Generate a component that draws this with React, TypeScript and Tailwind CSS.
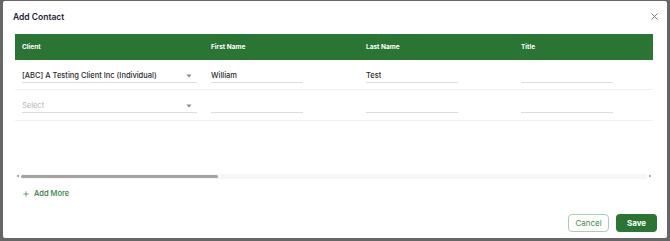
import { X, Plus } from 'lucide-react'

const font = { fontFamily: 'Inter, "Noto Sans", sans-serif' }

function Caret() {
  return (
    <svg width="6" height="4" viewBox="0 0 6 4" className="shrink-0">
      <path d="M0.5 0.5 L5.5 0.5 L3 3.5 Z" fill="#8a8a8a" />
    </svg>
  )
}

function Underline({ value, placeholder, select, wide }: { value?: string; placeholder?: string; select?: boolean; wide?: boolean }) {
  return (
    <div className={`flex h-[17px] items-center justify-between border-b border-[#dcdcdc] pt-[3px] ${wide ? 'w-[175px]' : 'w-[92px]'}`}>
      {value ? (
        <span className="truncate text-[7.5px] font-medium text-[#2b2b2b]">{value}</span>
      ) : (
        <span className="text-[7.5px] text-[#b4b4b4]">{placeholder}</span>
      )}
      {select && (
        <span className="mr-[5px]">
          <Caret />
        </span>
      )}
    </div>
  )
}

const cols = ['Client', 'First Name', 'Last Name', 'Title']

export default function App() {
  return (
    <div style={font} className="h-[241px] w-[670px] overflow-hidden bg-[#666666] pl-[3px] pt-[1px]">
      <div className="flex h-[237px] w-[664px] flex-col rounded-[2px] bg-white">
        <div className="flex h-[33px] items-center justify-between pl-[10px] pr-[7px]">
          <h2 className="-mt-[1px] text-[8.5px] font-semibold text-[#1d1d35]">Add Contact</h2>
          <X size={11} strokeWidth={2} className="-mt-[2px] text-[#6b6b78]" />
        </div>

        <div className="mx-[12px] w-[638px] overflow-hidden">
          <div className="flex h-[26px] items-center bg-[#2a7434] pt-[2px] text-[6.5px] font-bold text-white">
            <div className="w-[189px] shrink-0 pl-[7px]">{cols[0]}</div>
            <div className="w-[155px] shrink-0 pl-[7px]">{cols[1]}</div>
            <div className="w-[155px] shrink-0 pl-[7px]">{cols[2]}</div>
            <div className="w-[155px] shrink-0 pl-[7px]">{cols[3]}</div>
          </div>

          <div className="flex h-[30px] items-start border-b border-[#f0f0f0] pt-[6px]">
            <div className="w-[189px] shrink-0 pl-[7px]">
              <Underline value="[ABC] A Testing Client Inc (Individual)" select wide />
            </div>
            <div className="w-[155px] shrink-0 pl-[7px]">
              <Underline value="William" />
            </div>
            <div className="w-[155px] shrink-0 pl-[7px]">
              <Underline value="Test" />
            </div>
            <div className="w-[155px] shrink-0 pl-[7px]">
              <Underline />
            </div>
          </div>

          <div className="flex h-[31px] items-start border-b border-[#f0f0f0] pt-[6px]">
            <div className="w-[189px] shrink-0 pl-[7px]">
              <Underline placeholder="Select" select wide />
            </div>
            <div className="w-[155px] shrink-0 pl-[7px]">
              <Underline />
            </div>
            <div className="w-[155px] shrink-0 pl-[7px]">
              <Underline />
            </div>
            <div className="w-[155px] shrink-0 pl-[7px]">
              <Underline />
            </div>
          </div>

          {/* horizontal scrollbar */}
          <div className="mt-[52px] flex h-[6px] items-center gap-[1px]">
            <svg width="4" height="4" viewBox="0 0 4 4" className="ml-[1px] shrink-0">
              <path d="M3 0.5 L3 3.5 L0.5 2 Z" fill="#9a9a9a" />
            </svg>
            <div className="flex h-[5px] flex-1 items-center bg-[#f6f6f6]">
              <div className="h-[3px] w-[197px] rounded-full bg-[#a3a3a3]" />
            </div>
            <svg width="4" height="4" viewBox="0 0 4 4" className="mr-[1px] shrink-0">
              <path d="M1 0.5 L1 3.5 L3.5 2 Z" fill="#9a9a9a" />
            </svg>
          </div>
        </div>

        <button type="button" className="ml-[19px] mt-[9px] flex w-fit items-center gap-[4px] text-[7.5px] font-medium text-[#2e7d3a]">
          <Plus size={8} strokeWidth={2} />
          Add More
        </button>

        <div className="mt-auto mb-[6px] flex justify-end gap-[7px] pr-[10px]">
          <button type="button" className="h-[18px] w-[41px] rounded-[4px] border border-[#a9cfae] text-[8px] text-[#3d8a47]">
            Cancel
          </button>
          <button type="button" className="h-[18px] w-[41px] rounded-[4px] bg-[#2a7434] text-[8px] font-bold text-white">
            Save
          </button>
        </div>
      </div>
    </div>
  )
}
